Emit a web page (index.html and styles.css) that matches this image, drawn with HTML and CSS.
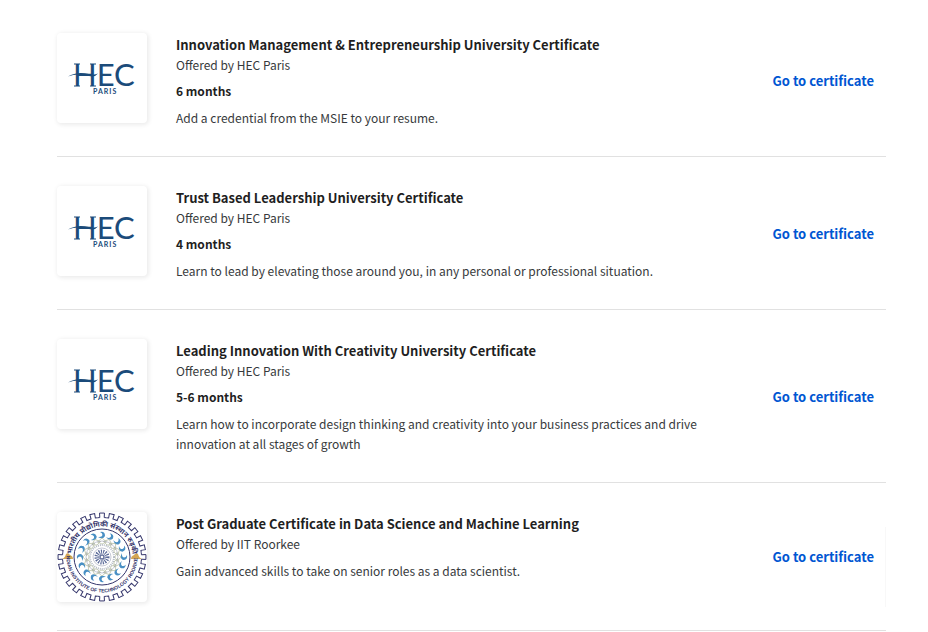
FILE: index.html
```html
<!DOCTYPE html>
<html lang="en">
<head>
    <meta charset="UTF-8">
    <meta name="viewport" content="width=device-width, initial-scale=1.0">
    <title>Certificates</title>
    <link rel="stylesheet" href="styles.css">
</head>
<body>
    <!-- shared logos -->
    <svg class="sprite" aria-hidden="true">
        <symbol id="hec" viewBox="0 0 90 90">
            <g class="hec_mark">
                <text class="hec_name" x="16" y="53">HEC</text>
                <!-- serifs and the stroke through the H -->
                <path d="M17 30.500H23V31.500H17ZM17 52.500H23V53.500H17ZM33 30.500H39V31.500H33ZM33 52.500H39V53.500H33ZM11 43.500Q20 38 32 41Q37 42.500 41 40.500Q38 44.500 32 43Q20 40 11 43.500Z"/>
                <text class="hec_city" x="36" y="61">PARIS</text>
            </g>
        </symbol>
        <symbol id="iit" viewBox="0 0 90 90">
            <defs>
                <!-- one gear tooth, repeated 28 times -->
                <path id="tooth" d="M40.580 5.750L42.790 5.560L42.540 1.070L47.460 1.070L47.210 5.560L49.420 5.750"/>
                <g id="teeth7">
                    <use href="#tooth"/>
                    <use href="#tooth" transform="rotate(12.857 45 45)"/>
                    <use href="#tooth" transform="rotate(25.714 45 45)"/>
                    <use href="#tooth" transform="rotate(38.571 45 45)"/>
                    <use href="#tooth" transform="rotate(51.429 45 45)"/>
                    <use href="#tooth" transform="rotate(64.286 45 45)"/>
                    <use href="#tooth" transform="rotate(77.143 45 45)"/>
                </g>
                <g id="swirl">
                    <path class="wave" d="M43 20Q48 19 48 24Q46 28 41 25Q45 25.500 45.500 23Q45.500 21 43 20Z"/>
                    <path class="leaf" d="M40.500 30L45 26L49.500 30L45 32Z"/>
                </g>
                <g id="swirl4">
                    <use href="#swirl"/>
                    <use href="#swirl" transform="rotate(22.500 45 45)"/>
                    <use href="#swirl" transform="rotate(45 45 45)"/>
                    <use href="#swirl" transform="rotate(67.500 45 45)"/>
                </g>
                <path id="arc_top" d="M14.500 45A30.500 30.500 0 0 1 75.500 45"/>
                <path id="arc_bottom" d="M9.500 45A35.500 35.500 0 0 0 80.500 45"/>
            </defs>
            <g class="gear">
                <use href="#teeth7"/>
                <use href="#teeth7" transform="rotate(90 45 45)"/>
                <use href="#teeth7" transform="rotate(180 45 45)"/>
                <use href="#teeth7" transform="rotate(270 45 45)"/>
            </g>
            <circle class="ring" cx="45" cy="45" r="28"/>
            <use href="#swirl4"/>
            <use href="#swirl4" transform="rotate(90 45 45)"/>
            <use href="#swirl4" transform="rotate(180 45 45)"/>
            <use href="#swirl4" transform="rotate(270 45 45)"/>
            <circle class="ring_thin" cx="45" cy="45" r="16"/>
            <circle class="dots" cx="45" cy="45" r="12"/>
            <circle class="ring_thin" cx="45" cy="45" r="9"/>
            <circle class="rays" cx="45" cy="45" r="5"/>
            <circle class="core" cx="45" cy="45" r="2"/>
            <path class="gold" d="M5 47Q8 46 9 42Q11 40 13 43Q16 44 16 47ZM85 47Q82 46 81 42Q79 40 77 43Q74 44 74 47Z"/>
            <text class="seal_hi"><textPath href="#arc_top" startOffset="50%" text-anchor="middle">भारतीय प्रौद्योगिकी संस्थान रुड़की</textPath></text>
            <text class="seal_en"><textPath href="#arc_bottom" startOffset="50%" text-anchor="middle">INDIAN INSTITUTE OF TECHNOLOGY ROORKEE</textPath></text>
        </symbol>
    </svg>

    <main class="certificates">
        <article class="certificate">
            <div class="logo"><svg role="img" aria-label="HEC Paris"><use href="#hec"/></svg></div>
            <div class="info">
                <h2 class="title">Innovation Management &amp; Entrepreneurship University Certificate</h2>
                <p class="partner">Offered by HEC Paris</p>
                <p class="duration">6 months</p>
                <p class="description">Add a credential from the MSIE to your resume.</p>
            </div>
            <a href="#" class="go_link">Go to certificate</a>
        </article>
        <article class="certificate">
            <div class="logo"><svg role="img" aria-label="HEC Paris"><use href="#hec"/></svg></div>
            <div class="info">
                <h2 class="title">Trust Based Leadership University Certificate</h2>
                <p class="partner">Offered by HEC Paris</p>
                <p class="duration">4 months</p>
                <p class="description">Learn to lead by elevating those around you, in any personal or professional situation.</p>
            </div>
            <a href="#" class="go_link">Go to certificate</a>
        </article>
        <article class="certificate">
            <div class="logo"><svg role="img" aria-label="HEC Paris"><use href="#hec"/></svg></div>
            <div class="info">
                <h2 class="title">Leading Innovation With Creativity University Certificate</h2>
                <p class="partner">Offered by HEC Paris</p>
                <p class="duration">5-6 months</p>
                <p class="description">Learn how to incorporate design thinking and creativity into your business practices and drive innovation at all stages of growth</p>
            </div>
            <a href="#" class="go_link">Go to certificate</a>
        </article>
        <article class="certificate">
            <div class="logo"><svg role="img" aria-label="IIT Roorkee"><use href="#iit"/></svg></div>
            <div class="info">
                <h2 class="title">Post Graduate Certificate in Data Science and Machine Learning</h2>
                <p class="partner">Offered by IIT Roorkee</p>
                <p class="description">Gain advanced skills to take on senior roles as a data scientist.</p>
            </div>
            <a href="#" class="go_link">Go to certificate</a>
        </article>
    </main>
</body>
</html>
```
FILE: styles.css
```css
*{box-sizing:border-box; margin:0; padding:0;}
body{background:#fff; color:#1f1f1f; font-family:"Noto Sans CJK SC", "Open Sans", sans-serif; font-size:12px; line-height:20px;}
.sprite{display:none;}

.certificates{padding:4px 42px 0 57px;}
.certificate{display:flex; align-items:center; padding:29px 0 28px; border-bottom:1px solid #e1e1e1;}
.certificate:last-child{position:relative;}
/* faint edge on the right of the last row */
.certificate:last-child::after{content:''; position:absolute; right:0; top:44px; bottom:23px; border-right:1px solid #f8f8f8;}

.logo{flex:none; align-self:flex-start; width:90px; height:90px; border-radius:4px; background:#fff; box-shadow:1px 1px 4px 1px rgba(0,0,0,0.08); overflow:hidden;}
.logo svg{display:block; width:100%; height:100%;}

.info{flex:1; align-self:flex-start; padding:2px 50px 0 29px;}
.title{font-size:13px; line-height:20px; font-weight:700;}
.partner, .description{color:#373a3c;}
.duration{margin-top:6px; font-weight:700;}
.description{margin-top:7px;}

.go_link{flex:none; padding:0 12px; color:#0056d2; font-size:13px; font-weight:700; text-decoration:none;}
.go_link:hover{text-decoration:underline;}

/* HEC logo */
.hec_mark{fill:#1b4b7a;}
.hec_name{font-family:Lato, sans-serif; font-size:31px; font-weight:400;}
.hec_city{font-family:Lato, sans-serif; font-size:7px; font-weight:700; letter-spacing:1px;}

/* IIT seal */
.gear{fill:none; stroke:#34356b; stroke-width:1;}
.ring{fill:none; stroke:#34356b; stroke-width:1;}
.ring_thin{fill:none; stroke:#8c93a8; stroke-width:0.5;}
.wave{fill:#4a90c4;}
.leaf{fill:none; stroke:#a8b190; stroke-width:0.6;}
.dots{fill:none; stroke:#b4bbc4; stroke-width:2; stroke-dasharray:1 1;}
.rays{fill:none; stroke:#5a6a98; stroke-width:5; stroke-dasharray:1 1;}
.core{fill:#fff; stroke:#34457c; stroke-width:1;}
.gold{fill:#d4a653;}
.seal_hi{fill:#34356b; font-family:"Noto Sans", sans-serif; font-size:7px; font-weight:700;}
.seal_en{fill:#34356b; font-family:"Liberation Sans", sans-serif; font-size:5px; font-weight:700;}
```
